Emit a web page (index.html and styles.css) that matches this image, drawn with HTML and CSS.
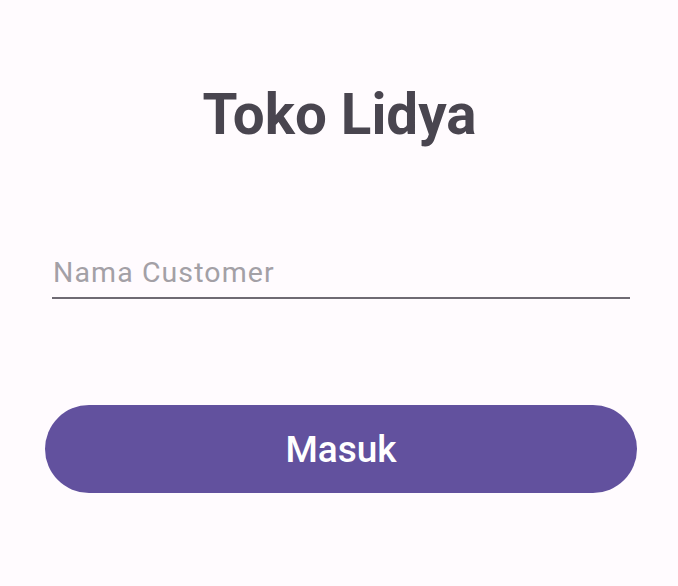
FILE: index.html
```html
<!DOCTYPE html>
<html>
<head>
<meta charset="utf-8">
<link rel="stylesheet" href="styles.css">
</head>
<body>
<main class="screen">
  <h1 class="title">Toko Lidya</h1>
  <div class="field">
    <span class="placeholder">Nama Customer</span>
  </div>
  <button class="btn">Masuk</button>
</main>
</body>
</html>
```

FILE: styles.css
```css
html, body {
  margin: 0;
  padding: 0;
  background: #fffbfe;
  font-family: Roboto, "Noto Sans", sans-serif;
}
.screen {
  width: 678px;
  height: 586px;
  box-sizing: border-box;
  display: flex;
  flex-direction: column;
  padding: 77px 41px 0 45px;
}
.title {
  margin: 0;
  text-align: center;
  font-size: 56.5px;
  font-weight: 700;
  color: #49454f;
  line-height: 76px;
  padding-right: 3px;
}
.field {
  margin: 96px 7px 0 7px;
  border-bottom: 2px solid #6f6a73;
  height: 48px;
  display: flex;
  align-items: flex-end;
}
.placeholder {
  font-size: 28.5px;
  letter-spacing: 1.1px;
  color: #a3a0a6;
  line-height: 38px;
  padding-bottom: 5px;
  padding-left: 1px;
}
.btn {
  margin-top: 106px;
  height: 88px;
  border: none;
  border-radius: 44px;
  background: #62519e;
  color: #ffffff;
  font-family: Roboto, sans-serif;
  font-size: 37px;
  font-weight: 500;
  padding-top: 2px;
}
```
